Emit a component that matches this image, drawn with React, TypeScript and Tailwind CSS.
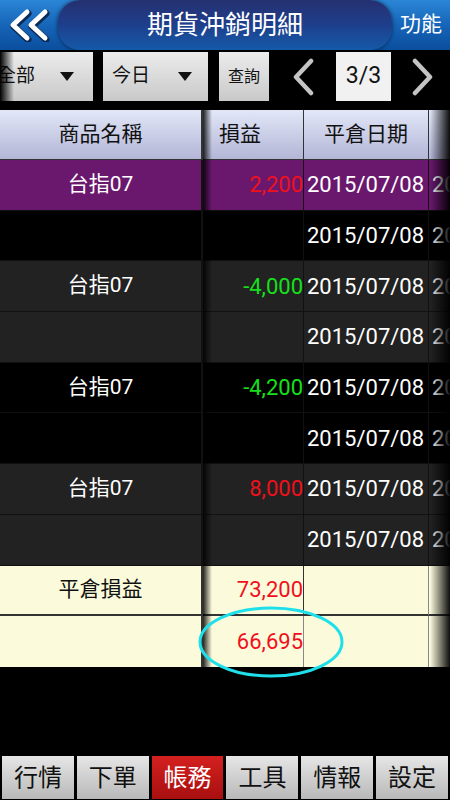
import React from "react";

type Row = {
  name: string;
  pl: string;
  plColor: string;
  date: string;
  bg: string;
};

const rows: Row[] = [
  { name: "台指07", pl: "2,200", plColor: "text-[#f0101c]", date: "2015/07/08", bg: "bg-[#6a186e]" },
  { name: "", pl: "", plColor: "", date: "2015/07/08", bg: "bg-black" },
  { name: "台指07", pl: "-4,000", plColor: "text-[#16e01a]", date: "2015/07/08", bg: "bg-[#222222]" },
  { name: "", pl: "", plColor: "", date: "2015/07/08", bg: "bg-[#222222]" },
  { name: "台指07", pl: "-4,200", plColor: "text-[#16e01a]", date: "2015/07/08", bg: "bg-black" },
  { name: "", pl: "", plColor: "", date: "2015/07/08", bg: "bg-black" },
  { name: "台指07", pl: "8,000", plColor: "text-[#f0101c]", date: "2015/07/08", bg: "bg-[#222222]" },
  { name: "", pl: "", plColor: "", date: "2015/07/08", bg: "bg-[#222222]" },
];

const tabs = ["行情", "下單", "帳務", "工具", "情報", "設定"];

const font = { fontFamily: 'Roboto, "Noto Sans CJK TC", sans-serif' };

function Caret() {
  return (
    <svg width="14" height="9" viewBox="0 0 14 9">
      <path d="M0 0 H14 L7 9 Z" fill="#111" />
    </svg>
  );
}

function BackIcon() {
  return (
    <svg width="44" height="34" viewBox="0 0 44 34">
      <g fill="none" strokeLinecap="round" strokeLinejoin="round">
        <path d="M20 4 L6 17 L20 30 M38 4 L24 17 L38 30" stroke="#0b2a55" strokeWidth="7" transform="translate(1 1.5)" />
        <path d="M20 4 L6 17 L20 30 M38 4 L24 17 L38 30" stroke="#ffffff" strokeWidth="5" />
      </g>
    </svg>
  );
}

function Chevron({ dir }: { dir: "left" | "right" }) {
  return (
    <svg width="24" height="38" viewBox="0 0 24 38">
      <path
        d={dir === "left" ? "M20 3 L5 19 L20 35" : "M4 3 L19 19 L4 35"}
        fill="none"
        stroke="#c4c4c4"
        strokeWidth="4.5"
        strokeLinecap="round"
        strokeLinejoin="round"
      />
    </svg>
  );
}

export default function App() {
  return (
    <div className="w-[450px] h-[800px] bg-black overflow-hidden flex flex-col" style={font}>
      {/* title bar */}
      <div className="h-[50px] flex items-stretch bg-gradient-to-b from-[#2b86d6] via-[#1665b8] to-[#0b4e9e]">
        <div className="w-[58px] flex items-center justify-center">
          <BackIcon />
        </div>
        <div className="w-[334px] rounded-[22px] bg-gradient-to-b from-[#253070] via-[#1d3f8c] to-[#135aa9] flex items-center justify-center shadow-[0_0_4px_rgba(0,0,0,0.6)]">
          <span className="text-white text-[26px] pt-[1px]">期貨沖銷明細</span>
        </div>
        <div className="flex-1 flex items-center justify-center">
          <span className="text-white text-[21px]">功能</span>
        </div>
      </div>

      {/* query bar */}
      <div className="h-[60px] flex items-start pt-[2px]">
        <div className="relative w-[93px] h-[49px] bg-gradient-to-b from-[#ececec] to-[#c9c9c9] flex items-center justify-between pr-[19px] overflow-hidden">
          <div className="absolute left-0 top-0 h-full w-[14px] bg-gradient-to-r from-[#000] to-transparent" />
          <span className="text-[19px] text-[#111] -ml-[3px]">全部</span>
          <Caret />
        </div>
        <div className="ml-[10px] w-[105px] h-[49px] bg-gradient-to-b from-[#ececec] to-[#c9c9c9] flex items-center justify-between pl-[9px] pr-[16px]">
          <span className="text-[19px] text-[#111]">今日</span>
          <Caret />
        </div>
        <div className="ml-[11px] w-[50px] h-[49px] bg-gradient-to-b from-[#ececec] to-[#c9c9c9] flex items-center justify-center">
          <span className="text-[16px] text-[#111]">查詢</span>
        </div>
        <div className="ml-[22px] h-[49px] flex items-center">
          <Chevron dir="left" />
        </div>
        <div className="ml-[21px] w-[55px] h-[49px] bg-[#f1f1f1] flex items-center justify-center">
          <span className="text-[23px] text-[#111]">3/3</span>
        </div>
        <div className="ml-[20px] h-[49px] flex items-center">
          <Chevron dir="right" />
        </div>
      </div>

      {/* table */}
      <div className="relative">
        <div className="grid grid-cols-[203px_101px_125px_21px] overflow-hidden">
          {/* header */}
          <div className="h-[50px] bg-gradient-to-b from-[#e2e7f8] to-[#b3b6d6] border-b border-r-2 border-[#333] flex items-center justify-center text-[21px] text-[#111]">商品名稱</div>
          <div className="h-[50px] bg-gradient-to-b from-[#e2e7f8] to-[#b3b6d6] border-b border-r border-[#333] flex items-center pl-[16px] text-[21px] text-[#111]">損益</div>
          <div className="h-[50px] bg-gradient-to-b from-[#e2e7f8] to-[#b3b6d6] border-b border-r border-[#333] flex items-center justify-center text-[21px] text-[#111]">平倉日期</div>
          <div className="h-[50px] bg-gradient-to-b from-[#e2e7f8] to-[#b3b6d6] border-b border-[#333]" />

          {rows.map((r, i) => (
            <React.Fragment key={i}>
              <div className={`h-[50.7px] ${r.bg} border-b border-r-2 border-[#111] flex items-center justify-center text-white text-[21px]`}>{r.name}</div>
              <div className={`h-[50.7px] ${r.bg} border-b border-r border-[#111] flex items-center justify-end text-[22px] ${r.plColor}`}>{r.pl}</div>
              <div className={`h-[50.7px] ${r.bg} border-b border-r border-[#111] flex items-center pl-[3px] text-white text-[22px] whitespace-nowrap overflow-hidden`}>{r.date}</div>
              <div className={`h-[50.7px] ${r.bg} border-b border-[#111] flex items-center pl-[3px] text-white text-[22px] whitespace-nowrap overflow-hidden`}>{r.date}</div>
            </React.Fragment>
          ))}

          {/* totals */}
          <div className="h-[50.7px] bg-[#fbfbdc] border-b-2 border-r-2 border-[#333] flex items-center justify-center text-[#111] text-[21px]">平倉損益</div>
          <div className="h-[50.7px] bg-[#fbfbdc] border-b-2 border-r border-[#333] flex items-center justify-end text-[#f0101c] text-[22px]">73,200</div>
          <div className="h-[50.7px] bg-[#fbfbdc] border-b-2 border-r border-[#333] border-r-[#888]" />
          <div className="h-[50.7px] bg-[#fbfbdc] border-b-2 border-[#333]" />

          <div className="h-[50.7px] bg-[#fbfbdc] border-r-2 border-[#333]" />
          <div className="h-[50.7px] bg-[#fbfbdc] border-r border-[#888] flex items-center justify-end text-[#f0101c] text-[22px]">66,695</div>
          <div className="h-[50.7px] bg-[#fbfbdc] border-r border-[#888]" />
          <div className="h-[50.7px] bg-[#fbfbdc]" />
        </div>

        {/* frozen column shadow */}
        <div className="absolute top-0 bottom-0 left-[203px] w-[9px] bg-gradient-to-r from-[rgba(0,0,0,0.85)] to-transparent pointer-events-none" />
        {/* right edge shadow */}
        <div className="absolute top-0 bottom-0 right-0 w-[20px] bg-gradient-to-r from-transparent to-[rgba(0,0,0,0.95)] pointer-events-none" />
        {/* marker ellipse */}
        <svg className="absolute left-[196px] top-[494px] pointer-events-none" width="150" height="76" viewBox="0 0 150 76">
          <ellipse cx="75" cy="38" rx="71" ry="34" fill="none" stroke="#1fe0ea" strokeWidth="3" />
        </svg>
      </div>

      <div className="flex-1" />

      {/* bottom tabs */}
      <div className="h-[44px] flex gap-[3px] px-[2px] pb-[1px]">
        {tabs.map((t) => (
          <div
            key={t}
            className={`flex-1 flex items-center justify-center text-[24px] ${
              t === "帳務"
                ? "bg-gradient-to-b from-[#d42020] to-[#a80f0f] text-white"
                : "bg-gradient-to-b from-[#e6e6e6] to-[#b9b9b9] text-[#111]"
            }`}
          >
            {t}
          </div>
        ))}
      </div>
    </div>
  );
}
